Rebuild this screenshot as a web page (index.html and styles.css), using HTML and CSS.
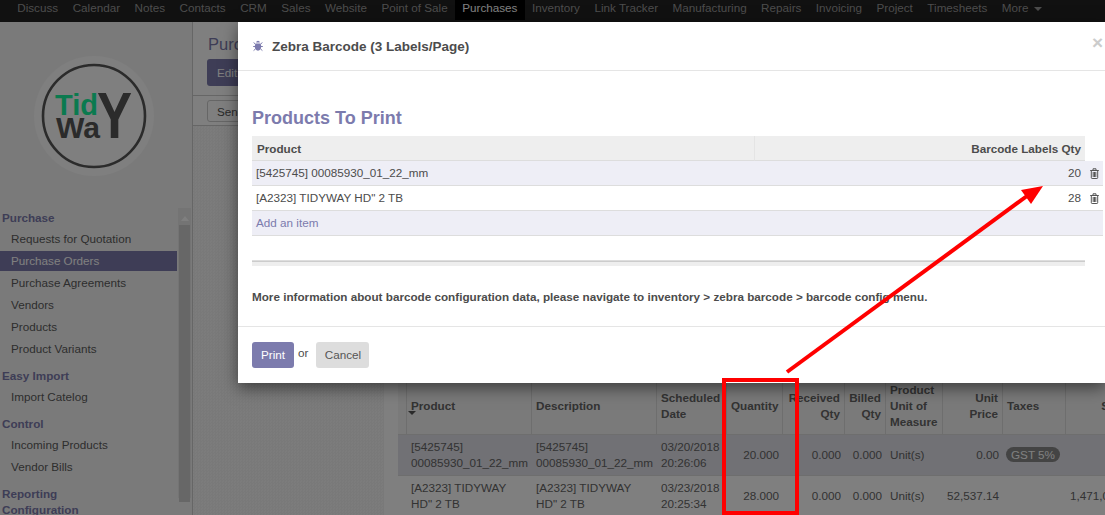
FILE: index.html
```html
<!DOCTYPE html>
<html lang="en">
<head>
<meta charset="UTF-8">
<title>Purchase Orders</title>
<link rel="stylesheet" href="styles.css">
</head>
<body>
  <nav class="navbar">
    <a>Discuss</a><a>Calendar</a><a>Notes</a><a>Contacts</a><a>CRM</a><a>Sales</a><a>Website</a><a>Point of Sale</a>
    <a class="active">Purchases</a>
    <a>Inventory</a><a>Link Tracker</a><a>Manufacturing</a><a>Repairs</a><a>Invoicing</a><a>Project</a><a>Timesheets</a>
    <a>More <span class="caret"></span></a>
  </nav>

  <div class="content">
    <aside class="sidebar">
      <svg class="logo" width="193" height="186" viewBox="0 22 193 186">
        <circle cx="94" cy="116" r="60" fill="#fefefe"/>
        <circle cx="94" cy="116" r="51" fill="none" stroke="#565656" stroke-width="2.6"/>
        <text x="55" y="115" class="logo-tid" textLength="43" lengthAdjust="spacingAndGlyphs">Tid</text>
        <text x="56" y="138" class="logo-way" textLength="44" lengthAdjust="spacingAndGlyphs">Wa</text>
        <text x="97" y="138" class="logo-y" textLength="35" lengthAdjust="spacingAndGlyphs">Y</text>
      </svg>
      <div class="menu-wrap">
        <div class="menu">
          <div class="menu-head">Purchase</div>
          <a class="menu-item">Requests for Quotation</a>
          <a class="menu-item selected">Purchase Orders</a>
          <a class="menu-item">Purchase Agreements</a>
          <a class="menu-item">Vendors</a>
          <a class="menu-item">Products</a>
          <a class="menu-item">Product Variants</a>
          <div class="menu-head">Easy Import</div>
          <a class="menu-item">Import Catelog</a>
          <div class="menu-head">Control</div>
          <a class="menu-item">Incoming Products</a>
          <a class="menu-item">Vendor Bills</a>
          <div class="menu-head">Reporting</div>
          <div class="menu-head tight">Configuration</div>
        </div>
        <div class="scrollbar">
          <span class="scroll-up"></span>
          <div class="scroll-thumb"></div>
        </div>
      </div>
    </aside>

    <main class="main">
      <div class="control-panel">
        <div class="breadcrumb">Purchase Orders</div>
        <div class="cp-buttons"><button class="btn-edit">Edit</button></div>
        <div class="cp-status"><button class="btn-send">Send RFQ by Email</button></div>
      </div>
      <div class="sheet-bg">
        <div class="sheet">
          <table class="lines">
            <colgroup>
              <col class="c-handle"><col class="c-prod"><col class="c-desc"><col class="c-date"><col class="c-qty">
              <col class="c-recv"><col class="c-bill"><col class="c-uom"><col class="c-price"><col class="c-tax"><col class="c-sub">
            </colgroup>
            <thead>
              <tr>
                <th></th>
                <th class="sorted">Product</th>
                <th>Description</th>
                <th>Scheduled Date</th>
                <th class="num">Quantity</th>
                <th class="num">Received Qty</th>
                <th class="num">Billed Qty</th>
                <th>Product Unit of Measure</th>
                <th class="num">Unit Price</th>
                <th>Taxes</th>
                <th class="num">Subtotal</th>
              </tr>
            </thead>
            <tbody>
              <tr class="odd">
                <td></td>
                <td>[5425745] 00085930_01_22_mm</td>
                <td>[5425745] 00085930_01_22_mm</td>
                <td>03/20/2018 20:26:06</td>
                <td class="num">20.000</td>
                <td class="num">0.000</td>
                <td class="num">0.000</td>
                <td class="mid">Unit(s)</td>
                <td class="num">0.00</td>
                <td class="mid"><span class="badge">GST 5%</span></td>
                <td class="num">0.00 Rs</td>
              </tr>
              <tr>
                <td></td>
                <td>[A2323] TIDYWAY HD" 2 TB</td>
                <td>[A2323] TIDYWAY HD" 2 TB</td>
                <td>03/23/2018 20:25:34</td>
                <td class="num">28.000</td>
                <td class="num">0.000</td>
                <td class="num">0.000</td>
                <td class="mid">Unit(s)</td>
                <td class="num">52,537.14</td>
                <td class="mid"></td>
                <td class="num">1,471,039.92 Rs</td>
              </tr>
            </tbody>
          </table>
        </div>
      </div>
    </main>
  </div>

  <div class="backdrop"></div>

  <div class="modal">
    <header class="modal-header">
      <svg class="bug" width="10" height="12" viewBox="0 0 10 12">
        <path d="M3.2 2.6a1.8 1.8 0 0 1 3.6 0z" fill="#7c7bad"/>
        <path d="M2.6 3.4h4.8c.6 1 .8 2 .8 3.2 0 2.3-1.3 4.2-3.2 4.2S1.800 8.900 1.800 6.600c0-1.200.2-2.200.8-3.200z" fill="#7c7bad"/>
        <path d="M.6 2.600l1.800 1.400M9.400 2.600L7.600 4M.2 6.500h2M9.800 6.500h-2M.6 10.600l1.800-1.600M9.400 10.600L7.600 9" stroke="#7c7bad" stroke-width="1" fill="none"/>
      </svg>
      <span class="modal-title">Zebra Barcode (3 Labels/Page)</span>
      <span class="close">×</span>
    </header>
    <div class="modal-body">
      <h3>Products To Print</h3>
      <table class="print-table">
        <colgroup><col class="p-name"><col class="p-qty"><col class="p-del"></colgroup>
        <thead>
          <tr><th>Product</th><th class="num">Barcode Labels Qty</th><th class="blank"></th></tr>
        </thead>
        <tbody>
          <tr class="tint">
            <td>[5425745] 00085930_01_22_mm</td><td class="num">20</td>
            <td class="del"><svg class="trash" width="9" height="11" viewBox="0 0 9 11"><path d="M.2 2.500h8.600M3 2.300V.800h3v1.500M1.300 2.500v7.200c0 .5.300.8.800.8h4.800c.5 0 .8-.3.800-.8V2.500M3.200 4v5M4.500 4v5M5.800 4v5" fill="none" stroke="#555" stroke-width="1"/></svg></td>
          </tr>
          <tr>
            <td>[A2323] TIDYWAY HD" 2 TB</td><td class="num">28</td>
            <td class="del"><svg class="trash" width="9" height="11" viewBox="0 0 9 11"><path d="M.2 2.500h8.600M3 2.300V.800h3v1.500M1.300 2.500v7.200c0 .5.300.8.800.8h4.800c.5 0 .8-.3.800-.8V2.500M3.200 4v5M4.500 4v5M5.800 4v5" fill="none" stroke="#555" stroke-width="1"/></svg></td>
          </tr>
          <tr class="tint"><td class="add-item">Add an item</td><td></td><td></td></tr>
          <tr><td></td><td></td><td class="no-line"></td></tr>
        </tbody>
        <tfoot>
          <tr><td></td><td></td><td class="blank"></td></tr>
        </tfoot>
      </table>
      <p class="note">More information about barcode configuration data, please navigate to inventory &gt; zebra barcode &gt; barcode config menu.</p>
    </div>
    <footer class="modal-footer">
      <button class="btn-print">Print</button>
      <span class="or">or</span>
      <button class="btn-cancel">Cancel</button>
    </footer>
  </div>

  <!-- red markup drawn on the screenshot -->
  <svg class="markup" width="1105" height="515" viewBox="0 0 1105 515">
    <rect x="724" y="380" width="73" height="133" fill="none" stroke="#ff0000" stroke-width="4"/>
    <path d="M787 372L1027 196" stroke="#ff0000" stroke-width="4" fill="none"/>
    <polygon points="1043,186 1021,190 1031,204" fill="#ff0000"/>
  </svg>
</body>
</html>
```

FILE: styles.css
```css
html, body {
  margin: 0;
  padding: 0;
  height: 515px;
  overflow: hidden;
}

body {
  position: relative;
  font-family: "Liberation Sans", Arial, sans-serif;
  font-size: 11.7px;
  color: #666;
  background: #fff;
}

button {
  font-family: inherit;
  font-size: 11.7px;
  border: none;
  border-radius: 3px;
}

/* top bar */
.navbar {
  display: flex;
  height: 22px;
  padding-left: 10px;
  background: #222;
  color: #999;
  line-height: 16px;
  font-size: 11.7px;
}

.navbar a {
  padding: 0 7.24px;
  height: 20px;
  white-space: nowrap;
}

.navbar a.active {
  background: #000;
  color: #fff;
}

.caret {
  display: inline-block;
  width: 0;
  height: 0;
  margin-left: 2px;
  vertical-align: middle;
  border-top: 4px solid #999;
  border-left: 4px solid transparent;
  border-right: 4px solid transparent;
}

.content {
  display: flex;
  height: 493px;
}

/* left menu */
.sidebar {
  width: 192px;
  flex: none;
  background: #f5f5f5;
  border-right: 1px solid #ccc;
  overflow: hidden;
}

.logo {
  display: block;
}

.logo-tid {
  font-family: "Liberation Sans", Arial, sans-serif;
  font-size: 29px;
  font-weight: bold;
  fill: #16f59e;
}

.logo-way {
  font-family: "Liberation Sans", Arial, sans-serif;
  font-size: 29px;
  font-weight: bold;
  fill: #565656;
}

.logo-y {
  font-family: "Liberation Sans", Arial, sans-serif;
  font-size: 65px;
  font-weight: bold;
  fill: #565656;
}

.menu-wrap {
  display: flex;
}

.menu {
  width: 177px;
  flex: none;
  padding-top: 2px;
}

.menu-head {
  padding-left: 2px;
  margin-top: 9px;
  line-height: 16px;
  font-weight: bold;
  color: #7c7bad;
}

.menu-head:first-child {
  margin-top: 0;
}

.menu-head.tight {
  margin-top: 0;
}

.menu-item {
  display: block;
  margin: 2px 0;
  padding-left: 11px;
  line-height: 20px;
  color: #5c5c5c;
}

.menu-head + .menu-item {
  margin-top: 3px;
}

.menu-item.selected {
  background: #7c7bad;
  color: #fff;
}

.scrollbar {
  width: 13px;
  margin-left: 1px;
  height: 290px;
  background: #e8e8e8;
}

.scroll-up {
  display: block;
  width: 0;
  height: 0;
  margin: 8px auto 0;
  border-bottom: 5px solid #fff;
  border-left: 4px solid transparent;
  border-right: 4px solid transparent;
}

.scroll-thumb {
  height: 277px;
  margin: 4px 1px 0 1px;
  background: #cecece;
}

/* form view behind the dialog */
.main {
  flex: 1;
  min-width: 0;
  display: flex;
  flex-direction: column;
}

.control-panel {
  height: 104px;
  flex: none;
  box-sizing: border-box;
  padding-left: 14px;
  background: #fff;
  border-bottom: 1px solid #ccc;
}

.breadcrumb {
  height: 37px;
  padding: 12px 0 0 1px;
  box-sizing: border-box;
  font-size: 16.5px;
  line-height: 20px;
  color: #7c7bad;
}

.cp-buttons {
  height: 36px;
  margin-left: -14px;
  padding-left: 14px;
  border-bottom: 1px solid #ccc;
}

.btn-edit {
  height: 27px;
  padding: 0 10px;
  background: #7c7bad;
  color: #fff;
}

.cp-status {
  padding-top: 4px;
}

.btn-send {
  height: 22px;
  padding: 0 9px;
  background: #fff;
  border: 1px solid #ccc;
  color: #555;
}

.sheet-bg {
  flex: 1;
  padding-left: 191px;
  background: repeating-conic-gradient(#f2f2f2 0 25%, #f9f9f9 0 50%) 0 0 / 3px 3px;
  overflow: hidden;
}

.sheet {
  height: 100%;
  box-sizing: border-box;
  padding: 252px 0 0 14px;
  background: #fff;
}

.lines {
  table-layout: fixed;
  width: 755px;
  border-collapse: separate;
  border-spacing: 0;
  line-height: 16px;
}

.c-handle { width: 9px; }
.c-prod { width: 125px; }
.c-desc { width: 125px; }
.c-date { width: 70px; }
.c-qty { width: 56px; }
.c-recv { width: 62px; }
.c-bill { width: 41px; }
.c-uom { width: 57px; }
.c-price { width: 60px; }
.c-tax { width: 63px; }
.c-sub { width: 87px; }

.lines th {
  height: 48px;
  padding: 4px;
  text-align: left;
  font-weight: bold;
  background: #f5f5f5;
  border-right: 1px solid #ddd;
  border-bottom: 1px solid #ddd;
}

.lines th.num,
.lines td.num {
  text-align: right;
}

.lines th.sorted {
  position: relative;
}

.lines th.sorted::after {
  content: "";
  position: absolute;
  left: 1px;
  top: 33px;
  border-top: 4px solid #555;
  border-left: 4px solid transparent;
  border-right: 4px solid transparent;
}

.lines td {
  padding: 4px;
  vertical-align: top;
  border-bottom: 1px solid #ddd;
}

.lines td.num,
.lines td.mid {
  vertical-align: middle;
  white-space: nowrap;
}

.lines tr.odd td {
  background: #e2e2ea;
}

.badge {
  display: inline-block;
  margin-left: -1px;
  padding: 0 5px;
  line-height: 15px;
  border-radius: 8px;
  background: #888;
  color: #fff;
  white-space: nowrap;
}

.backdrop {
  position: absolute;
  inset: 0;
  background: rgba(0, 0, 0, 0.5);
}

/* dialog */
.modal {
  position: absolute;
  left: 238px;
  top: 22px;
  width: 867px;
  height: 361px;
  display: flex;
  flex-direction: column;
  background: #fff;
  box-shadow: 0 5px 15px rgba(0, 0, 0, 0.5);
  color: #666;
}

.modal-header {
  display: flex;
  align-items: center;
  height: 48px;
  flex: none;
  padding: 0 2px 0 15px;
  border-bottom: 1px solid #e5e5e5;
}

.bug {
  margin-right: 9px;
}

.modal-title {
  font-size: 13.5px;
  font-weight: bold;
  color: #4c4c4c;
}

.close {
  margin-left: auto;
  margin-top: -7px;
  font-size: 19px;
  font-weight: bold;
  line-height: 20px;
  color: #ccc;
}

.modal-body {
  flex: 1;
  padding: 36px 2px 0 14px;
}

.modal-body h3 {
  margin: 0 0 7px;
  font-size: 18px;
  line-height: 22px;
  font-weight: bold;
  color: #7c7bad;
}

.print-table {
  table-layout: fixed;
  width: 851px;
  border-collapse: separate;
  border-spacing: 0;
  color: #4c4c4c;
}

.p-name { width: 503px; }
.p-qty { width: 330px; }
.p-del { width: 18px; }

.print-table th {
  height: 24px;
  padding: 0 4px 0 5px;
  text-align: left;
  background: #eee;
  font-weight: bold;
  color: #4c4c4c;
  border-bottom: 1px solid #ddd;
  border-right: 1px solid #e4e4e4;
}

.print-table th.num {
  text-align: right;
  border-right: none;
}

.print-table th.blank {
  background: #fff;
  border: none;
}

.print-table td {
  height: 23px;
  padding: 0 4px 1px;
  border-bottom: 1px solid #ddd;
}

.print-table td.num {
  text-align: right;
}

.print-table td.del {
  padding: 0 0 0 4.5px;
}

.print-table td.no-line {
  border-bottom: none;
}

.trash {
  display: block;
}

.print-table tr.tint td {
  background: #eeeef6;
}

.add-item {
  color: #7c7bad;
}

.print-table tfoot td {
  height: 4px;
  padding: 0;
  background: #eee;
  border-top: 1px solid #ccc;
  border-bottom: none;
}

.print-table tfoot td.blank {
  background: #fff;
  border: none;
}

.note {
  margin: 23px 0 0;
  line-height: 16px;
  font-weight: bold;
  color: #4c4c4c;
}

.modal-footer {
  display: flex;
  align-items: flex-start;
  flex: none;
  height: 57px;
  box-sizing: border-box;
  padding: 15px 14px;
  border-top: 1px solid #e5e5e5;
}

.btn-print {
  width: 42px;
  height: 26px;
  padding: 0 0 2px;
  background: #7c7bad;
  color: #fff;
}

.or {
  margin: 4px 8px 0 4px;
  color: #4c4c4c;
}

.btn-cancel {
  width: 53px;
  height: 26px;
  padding: 0 0 2px;
  background: #ddd;
  color: #555;
}

.markup {
  position: absolute;
  left: 0;
  top: 0;
}
```
